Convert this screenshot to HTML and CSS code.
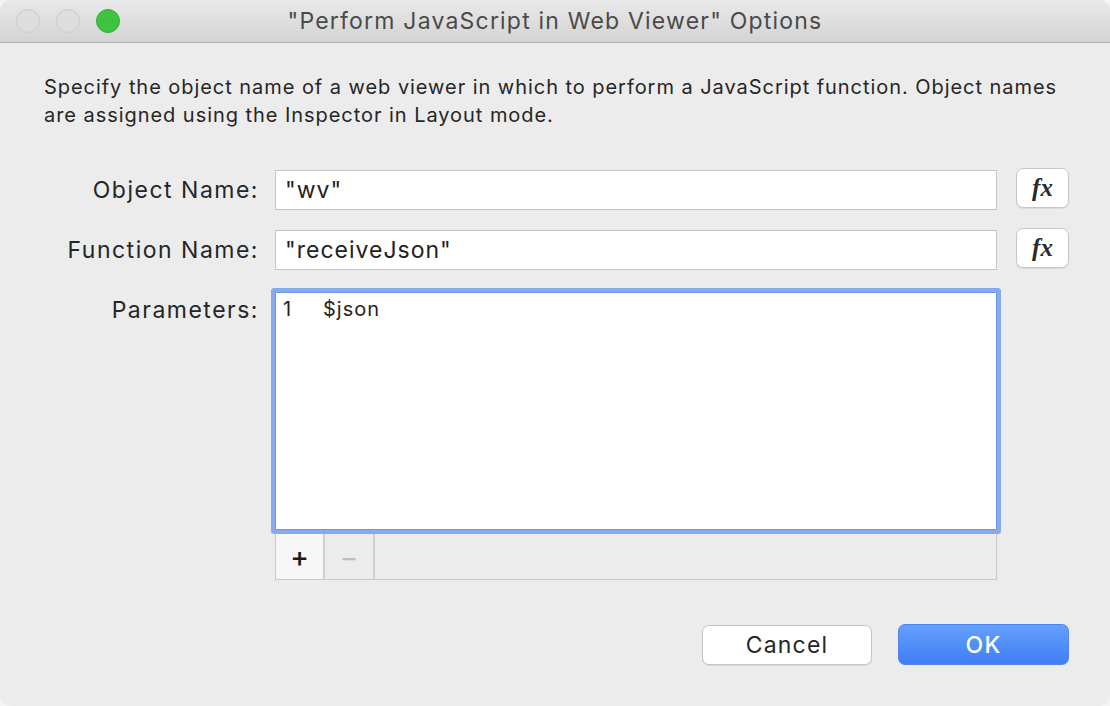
FILE: index.html
```html
<!DOCTYPE html>
<html>
<head>
<meta charset="utf-8">
<link rel="stylesheet" href="styles.css">
</head>
<body>
<div class="window">
  <div class="titlebar">
    <div class="lights">
      <span class="light off"></span>
      <span class="light off"></span>
      <span class="light green"></span>
    </div>
    <div class="title">"Perform JavaScript in Web Viewer" Options</div>
    <div class="spacer"></div>
  </div>
  <div class="content">
    <p class="desc">Specify the object name of a web viewer in which to perform a JavaScript function. Object names are assigned using the Inspector in Layout mode.</p>
    <div class="form">
      <label class="label">Object Name:</label>
      <div class="input">"wv"</div>
      <button class="fx">fx</button>

      <label class="label">Function Name:</label>
      <div class="input">"receiveJson"</div>
      <button class="fx">fx</button>

      <label class="label params-label">Parameters:</label>
      <div class="params">
        <div class="listbox">
          <div class="param-row"><span class="num">1</span><span>$json</span></div>
        </div>
        <div class="toolbar">
          <span class="tb-btn add">+</span>
          <span class="tb-btn remove">−</span>
          <span class="tb-fill"></span>
        </div>
      </div>
      <div></div>
    </div>
    <div class="actions">
      <button class="btn cancel">Cancel</button>
      <button class="btn ok">OK</button>
    </div>
  </div>
</div>
</body>
</html>
```
FILE: styles.css
```css
* { box-sizing: border-box; }
html, body { margin: 0; padding: 0; }
body {
  width: 1110px;
  height: 706px;
  background: #f4f4f4;
  font-family: Inter, "Liberation Sans", sans-serif;
  color: #232323;
  overflow: hidden;
}
.window {
  width: 1110px;
  height: 706px;
  background: #ececec;
  border-radius: 11px;
  overflow: hidden;
  display: flex;
  flex-direction: column;
}
.titlebar {
  height: 43px;
  flex: none;
  display: grid;
  grid-template-columns: 1fr auto 1fr;
  align-items: center;
  background: linear-gradient(#e9e9e9, #d4d4d4);
  border-bottom: 1px solid #b4b4b4;
}
.lights {
  display: flex;
  gap: 16px;
  padding-left: 16px;
}
.light {
  width: 24px;
  height: 24px;
  border-radius: 50%;
}
.light.off {
  background: #dddddd;
  border: 1px solid #cbcbcb;
}
.light.green {
  background: #3ec43f;
  border: 1px solid #34ad35;
}
.title {
  font-size: 23px;
  color: #4a4a4a;
  letter-spacing: 1.2px;
}
.content {
  flex: 1;
  display: flex;
  flex-direction: column;
  padding: 0 41px 0 44px;
}
.desc {
  margin: 30px 0 0 0;
  font-size: 20px;
  line-height: 28px;
  letter-spacing: 0.95px;
  color: #262626;
}
.form {
  margin-top: 41px;
  display: grid;
  grid-template-columns: 214px 722px 53px;
  column-gap: 17px;
  row-gap: 20px;
}
.form > :nth-child(3n) { margin-left: 2px; }
.label {
  font-size: 23px;
  letter-spacing: 1.5px;
  text-align: right;
  align-self: center;
  color: #262626;
  white-space: nowrap;
  margin-right: -1px;
}
.params-label {
  align-self: start;
  margin-top: 6px;
}
.input {
  height: 40px;
  background: #fff;
  border: 1px solid #c4c4c4;
  font-size: 23px;
  letter-spacing: 1px;
  line-height: 38px;
  padding-left: 9px;
  color: #222;
}
.fx {
  width: 53px;
  height: 40px;
  margin-top: -2px;
  background: #fff;
  border: 1px solid #c6c6c6;
  border-radius: 7px;
  box-shadow: 0 1px 1px rgba(0,0,0,0.08);
  font-family: "Liberation Serif", serif;
  font-style: italic;
  font-weight: bold;
  font-size: 25px;
  color: #2a2a2a;
  padding: 0;
}
.params {
  display: flex;
  flex-direction: column;
  margin-top: 2px;
}
.listbox {
  height: 238px;
  background: #fff;
  border: 1px solid #6f96e6;
  box-shadow: 0 0 0 4px #86a9ef;
  border-radius: 1px;
  padding: 4px 7px;
  font-size: 20px;
  letter-spacing: 1px;
  position: relative;
  z-index: 1;
}
.param-row {
  display: flex;
  line-height: 24px;
}
.num { width: 40px; }
.toolbar {
  height: 50px;
  display: flex;
  border: 1px solid #c9c9c9;
  border-top: none;
}
.tb-btn {
  width: 49px;
  display: flex;
  align-items: center;
  justify-content: center;
  border-right: 2px solid #cfcfcf;
  font-size: 28px;
  padding-top: 4px;
}
.tb-btn.add { background: #f7f7f7; color: #1a1a1a; font-weight: 500; }
.tb-btn.remove { background: #ececec; color: #bdbdbd; width: 50px; }
.tb-fill { flex: 1; background: #ececec; }
.actions {
  display: flex;
  justify-content: flex-end;
  gap: 26px;
  margin-top: 45px;
}
.btn {
  width: 170px;
  height: 40px;
  border-radius: 7px;
  font-family: Inter, "Liberation Sans", sans-serif;
  font-size: 23px;
  letter-spacing: 1.2px;
  padding: 0;
}
.btn.cancel {
  background: #fff;
  border: 1px solid #c4c4c4;
  box-shadow: 0 1px 1px rgba(0,0,0,0.08);
  color: #262626;
}
.btn.ok {
  width: 171px;
  height: 41px;
  margin-top: -1px;
  border: 1px solid #4d86f1;
  background: linear-gradient(#64a0fb, #3f7ef6);
  color: #fff;
  font-weight: 500;
}
```
